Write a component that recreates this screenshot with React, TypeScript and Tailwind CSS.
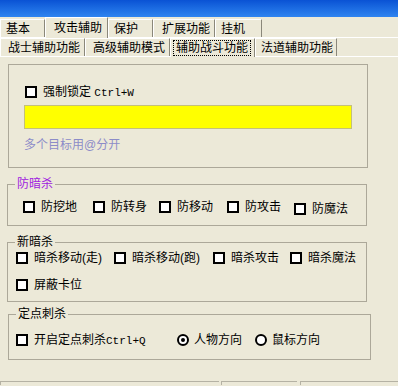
import React from "react";

const TOP_TABS = [
  { label: "基本", cls: "w-[45px] pl-[5px]" },
  { label: "攻击辅助", cls: "w-[63px] pl-[8px]", selected: true },
  { label: "保护", cls: "w-[45px] pl-[5px]" },
  { label: "扩展功能", cls: "w-[62px] pl-[8px]" },
  { label: "挂机", cls: "w-[47px] pl-[5px]" },
];

const SUB_TABS = [
  { label: "战士辅助功能", cls: "w-[85px] pl-[7px]" },
  { label: "高级辅助模式", cls: "w-[85px] pl-[7px]" },
  { label: "辅助战斗功能", cls: "w-[85px] pl-[2px]", selected: true },
  { label: "法道辅助功能", cls: "w-[82px] pl-[5px]" },
];

const Check = ({ label, mono }: { label: string; mono?: string }) => (
  <div className="flex items-center h-[16px] gap-[6px] whitespace-nowrap">
    <span className="w-[12px] h-[12px] border-2 border-black bg-white shrink-0" />
    <span className="text-[12px] leading-[16px] text-black">
      {label}
      {mono && (
        <span className="font-['Liberation_Mono',monospace] text-[11px]">{mono}</span>
      )}
    </span>
  </div>
);

const Radio = ({ label, checked }: { label: string; checked?: boolean }) => (
  <div className="flex items-center h-[16px] gap-[5px] whitespace-nowrap">
    <span className="w-[12px] h-[12px] rounded-full border-2 border-black bg-white flex items-center justify-center shrink-0">
      {checked && <span className="w-[4px] h-[4px] rounded-full bg-black" />}
    </span>
    <span className="text-[12px] leading-[16px] text-black">{label}</span>
  </div>
);

export default function App() {
  return (
    <div className="w-[398px] h-[386px] overflow-hidden bg-[#ece9d8] font-['Liberation_Sans','Noto_Sans_CJK_SC',sans-serif] text-[12px] text-black">
      {/* title bar remnant */}
      <div className="h-[17px] bg-gradient-to-b from-[#0a52d4] to-[#2f84f0]" />

      {/* outer tabs */}
      <div className="h-[21px] flex items-end border-b border-white">
        {TOP_TABS.map((t) => (
          <div
            key={t.label}
            className={`${t.cls} flex items-center border-l border-t border-white border-r border-r-[#8a877a] leading-[16px] ${
              t.selected ? "h-[21px] -mb-px bg-[#ece9d8] relative" : "h-[18px]"
            }`}
          >
            {t.label}
          </div>
        ))}
      </div>

      {/* inner tabs */}
      <div className="h-[19px] flex items-end border-b border-white">
        {SUB_TABS.map((t) => (
          <div
            key={t.label}
            className={`${t.cls} flex items-center border-l border-t border-white border-r border-r-[#8a877a] leading-[16px] ${
              t.selected ? "h-[19px] -mb-px bg-[#ece9d8] relative" : "h-[18px]"
            }`}
          >
            {t.selected ? (
              <span className="border border-dotted border-black px-[2px] leading-[14px]">{t.label}</span>
            ) : (
              t.label
            )}
          </div>
        ))}
      </div>

      <div className="pt-[7px]">
        {/* lock box */}
        <div className="ml-[8px] w-[360px] h-[104px] border border-[#aca899] pt-[19px] pl-[15px]">
          <div className="ml-[1px]">
            <Check label="强制锁定 " mono="Ctrl+W" />
          </div>
          <div className="mt-[5px] w-[328px] h-[24px] bg-[#ffff00] border border-[#c4c07a]" />
          <div className="mt-[8px] h-[16px] leading-[16px] text-[#8c8cc8]">多个目标用@分开</div>
        </div>

        {/* 防暗杀 */}
        <fieldset className="mt-[8px] ml-[7px] w-[360px] border border-[#aca899] pb-[8px]">
          <legend className="ml-[7px] px-[2px] leading-[16px] text-[#a020e0]">防暗杀</legend>
          <div className="mt-[7px] flex pl-[15px]">
            <div className="w-[70px]"><Check label="防挖地" /></div>
            <div className="w-[66px]"><Check label="防转身" /></div>
            <div className="w-[68px]"><Check label="防移动" /></div>
            <div className="w-[67px]"><Check label="防攻击" /></div>
            <div className="mt-[2px]"><Check label="防魔法" /></div>
          </div>
        </fieldset>

        {/* 新暗杀 */}
        <fieldset className="mt-[8px] ml-[7px] w-[360px] border border-[#aca899] pb-[8px]">
          <legend className="ml-[7px] px-[2px] leading-[16px]">新暗杀</legend>
          <div className="flex pl-[8px]">
            <div className="w-[98px]"><Check label="暗杀移动(走)" /></div>
            <div className="w-[99px]"><Check label="暗杀移动(跑)" /></div>
            <div className="w-[77px]"><Check label="暗杀攻击" /></div>
            <Check label="暗杀魔法" />
          </div>
          <div className="mt-[11px] pl-[8px]">
            <Check label="屏蔽卡位" />
          </div>
        </fieldset>

        {/* 定点刺杀 */}
        <fieldset className="mt-[4px] ml-[8px] w-[363px] border border-[#aca899] pb-[11px]">
          <legend className="ml-[7px] px-[2px] leading-[16px]">定点刺杀</legend>
          <div className="mt-[10px] flex pl-[7px]">
            <div className="w-[161px]"><Check label="开启定点刺杀" mono="Ctrl+Q" /></div>
            <div className="w-[78px]"><Radio label="人物方向" checked /></div>
            <Radio label="鼠标方向" />
          </div>
        </fieldset>

        {/* edges of the controls below */}
        <div className="mt-[21px] flex h-[4px]">
          <div className="w-[219px] border-t border-l border-[#b5b2a4]" />
          <div className="ml-[2px] w-[76px] border-t border-l border-[#b5b2a4]" />
          <div className="ml-[3px] flex-1 border-t border-l border-[#b5b2a4]" />
        </div>
      </div>
    </div>
  );
}
